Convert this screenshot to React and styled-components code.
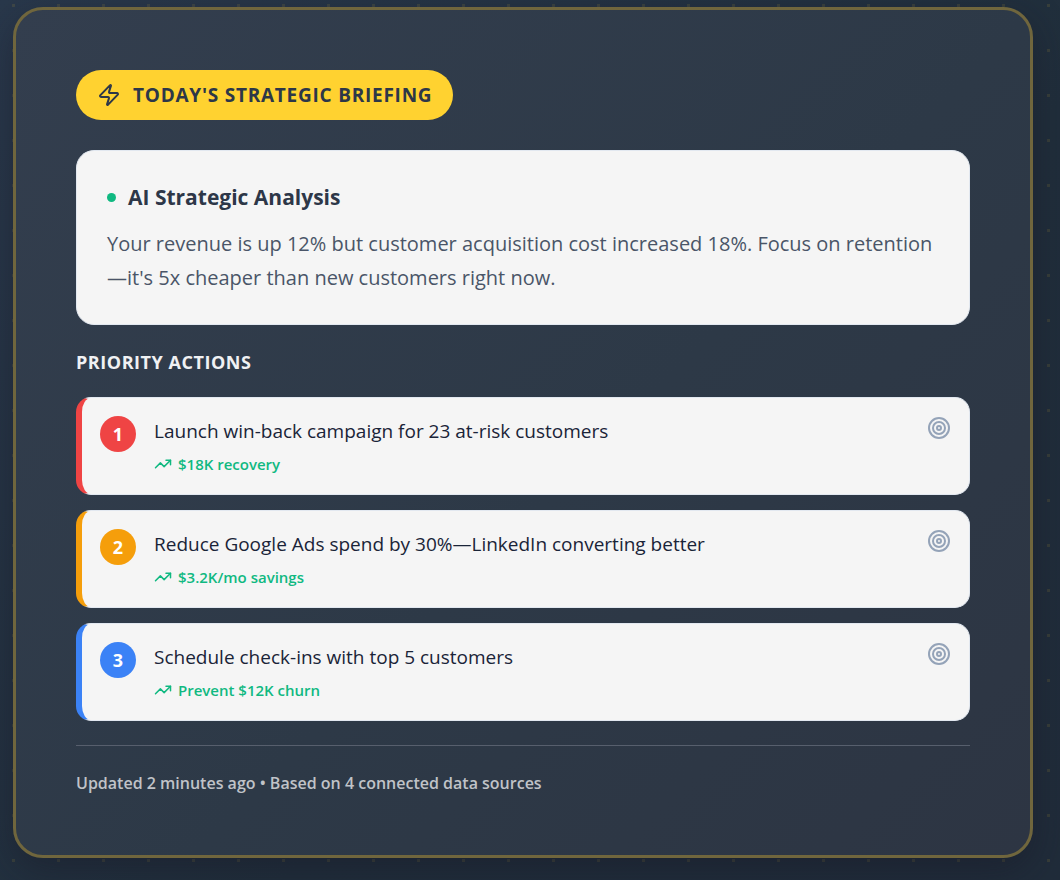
import React from 'react';
import styled, { createGlobalStyle } from 'styled-components';
import { Target, TrendingUp, Zap } from 'lucide-react';

const ACTIONS = [
    {
        id: 1,
        title: 'Launch win-back campaign for 23 at-risk customers',
        impact: '$18K recovery',
        color: '#ef4444',
    },
    {
        id: 2,
        title: 'Reduce Google Ads spend by 30%—LinkedIn converting better',
        impact: '$3.2K/mo savings',
        color: '#f59e0b',
    },
    {
        id: 3,
        title: 'Schedule check-ins with top 5 customers',
        impact: 'Prevent $12K churn',
        color: '#3b82f6',
    },
];

const GlobalStyle = createGlobalStyle`
    *,
    *::before,
    *::after {
        box-sizing: border-box;
    }

    body {
        margin: 0;
        font-family: 'Segoe UI', 'Open Sans', 'Noto Sans', sans-serif;
        background: #1f2c3a;
    }

    h2,
    h3,
    p,
    ol {
        margin: 0;
        padding: 0;
    }
`;

const Page = styled.main`
    min-height: 100vh;
    padding: 7px 27px 23px 13px;
    background-image: conic-gradient(
            from 270deg at 3px 3px,
            #ffd2301a 90deg,
            transparent 90deg
        ),
        linear-gradient(135deg, #29384b 0%, #202e3b 60%, #202c3a 100%);
    background-size: 45px 45px, auto;
    background-position: 12px 4px, 0 0;
`;

const Panel = styled.section`
    padding: 60px;
    border: 3px solid #70663d;
    border-radius: 30px;
    background: linear-gradient(135deg, #333e4e 0%, #2d3947 55%, #2d3543 100%);
    box-shadow: 0 12px 36px rgba(22, 20, 34, 0.4);
`;

const Badge = styled.h2`
    display: inline-flex;
    align-items: center;
    gap: 12px;
    height: 50px;
    padding: 0 21px;
    border-radius: 25px;
    background: #ffd230;
    color: #2d3748;
    font-size: 19px;
    font-weight: 700;
    line-height: 30px;
    letter-spacing: 0.04em;
    text-transform: uppercase;
    vertical-align: top;
`;

const Analysis = styled.article`
    margin-top: 30px;
    padding: 29px 30px;
    border: 1px solid #e2e8f0;
    border-radius: 18px;
    background: #f5f5f5;
`;

const AnalysisTitle = styled.h3`
    display: flex;
    align-items: center;
    gap: 12px;
    color: #2d3748;
    font-size: 21px;
    font-weight: 700;
    line-height: 35px;

    &::before {
        content: '';
        width: 9px;
        height: 9px;
        border-radius: 50%;
        background: #10b981;
    }
`;

const AnalysisText = styled.p`
    margin-top: 12px;
    color: #4a5568;
    font-size: 20px;
    line-height: 34px;
`;

const SectionTitle = styled.h3`
    margin-top: 24px;
    color: #f0f1f3;
    font-size: 18px;
    font-weight: 700;
    line-height: 27px;
    letter-spacing: 0.03em;
    text-transform: uppercase;
`;

const ActionList = styled.ol`
    display: grid;
    gap: 15px;
    margin-top: 21px;
    list-style: none;
`;

const Action = styled.li`
    display: flex;
    align-items: flex-start;
    gap: 18px;
    padding: 18px;
    border: 1px solid #e2e8f0;
    border-left: 6px solid ${(props) => props.$color};
    border-radius: 15px;
    background: #f5f5f5;
`;

const ActionNumber = styled.span`
    flex: none;
    width: 36px;
    border-radius: 50%;
    background: ${(props) => props.$color};
    color: #fff;
    font-size: 18px;
    font-weight: 700;
    line-height: 36px;
    text-align: center;
`;

const ActionBody = styled.div`
    flex: 1;
`;

const ActionTitle = styled.p`
    color: #1a2438;
    font-size: 19px;
    font-weight: 500;
    line-height: 30px;
`;

const Impact = styled.p`
    display: flex;
    align-items: center;
    gap: 6px;
    margin-top: 6px;
    color: #10b981;
    font-size: 15px;
    font-weight: 600;
    line-height: 24px;
`;

const Footer = styled.footer`
    margin-top: 24px;
    padding-top: 25px;
    border-top: 1px solid #575f6d;
    color: #c0c3c8;
    font-size: 16px;
    font-weight: 600;
    line-height: 24px;
`;

export default function App() {
    return (
        <>
            <GlobalStyle />
            <Page>
                <Panel>
                    <Badge>
                        <Zap size={24} strokeWidth={2} aria-hidden="true" />
                        Today&apos;s Strategic Briefing
                    </Badge>
                    <Analysis>
                        <AnalysisTitle>AI Strategic Analysis</AnalysisTitle>
                        <AnalysisText>
                            Your revenue is up 12% but customer acquisition cost increased 18%.
                            Focus on retention—it&apos;s 5x cheaper than new customers right now.
                        </AnalysisText>
                    </Analysis>
                    <SectionTitle>Priority Actions</SectionTitle>
                    <ActionList>
                        {ACTIONS.map((action) => (
                            <Action key={action.id} $color={action.color}>
                                <ActionNumber $color={action.color}>{action.id}</ActionNumber>
                                <ActionBody>
                                    <ActionTitle>{action.title}</ActionTitle>
                                    <Impact>
                                        <TrendingUp size={18} aria-hidden="true" />
                                        {action.impact}
                                    </Impact>
                                </ActionBody>
                                <Target size={24} color="#94a3b8" aria-hidden="true" />
                            </Action>
                        ))}
                    </ActionList>
                    <Footer>Updated 2 minutes ago • Based on 4 connected data sources</Footer>
                </Panel>
            </Page>
        </>
    );
}
